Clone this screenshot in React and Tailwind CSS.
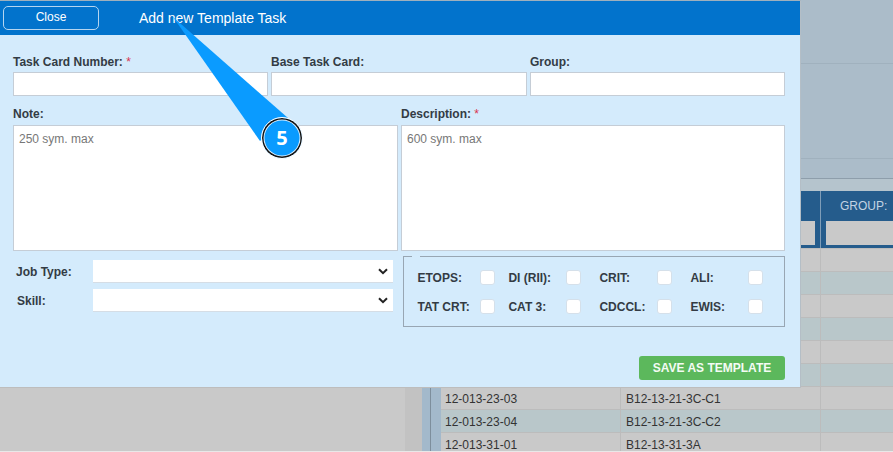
import React from "react";

const rows = [
    { bg: "bg-[#c9c9c9]" },
    { bg: "bg-[#b9c7ca]" },
    { bg: "bg-[#c9c9c9]" },
    { bg: "bg-[#b9c7ca]" },
    { bg: "bg-[#c9c9c9]" },
    { bg: "bg-[#b9c7ca]" },
    { bg: "bg-[#c9c9c9]", a: "12-013-23-03", b: "B12-13-21-3C-C1" },
    { bg: "bg-[#b9c7ca]", a: "12-013-23-04", b: "B12-13-21-3C-C2" },
    { bg: "bg-[#c9c9c9]", a: "12-013-31-01", b: "B12-13-31-3A" },
];

const checks = [
    ["ETOPS:", "DI (RII):", "CRIT:", "ALI:"],
    ["TAT CRT:", "CAT 3:", "CDCCL:", "EWIS:"],
];

function Label({ children, required, className = "" }) {
    return (
        <div className={`text-[12px] leading-[14px] font-bold text-[#333b44] h-[17px] ${className}`}>
            {children}
            {required && <span className="text-[#d9344f] font-normal"> *</span>}
        </div>
    );
}

function Field({ label, required, className }) {
    return (
        <div className={className}>
            <Label required={required}>{label}</Label>
            <div className="h-[24px] bg-white border border-[#c5cdd6]" />
        </div>
    );
}

function Area({ label, required, hint, className }) {
    return (
        <div className={className}>
            <Label required={required} className="-mt-[1px] mb-[1px]">{label}</Label>
            <div className="h-[126px] bg-white border border-[#c5cdd6] px-[5px] py-[5px] text-[12px] leading-[16px] text-[#777]">
                {hint}
            </div>
        </div>
    );
}

function Select({ label, className }) {
    return (
        <div className="flex items-center h-[23px]">
            <div className={`w-[80px] text-[12px] font-bold text-[#333b44] ${className}`}>{label}</div>
            <div className="w-[300px] h-[23px] bg-white border-b border-[#d5dde5] flex items-center justify-end pr-[5px]">
                <svg width="10" height="7" viewBox="0 0 10 7" fill="none">
                    <path d="M1 1.2 L5 5.2 L9 1.2" stroke="#222" strokeWidth="2" />
                </svg>
            </div>
        </div>
    );
}

export default function App() {
    return (
        <div className="w-[893px] h-[452px] bg-[#e8e8e8] font-['Liberation_Sans',Arial,sans-serif]">
            <div className="relative h-[451px] overflow-hidden bg-[#c9c9c9]">
                {/* page behind the dialog */}
                <div className="h-[64px] bg-[#abbcc9] border-b border-[#a0b1be]" />
                <div className="h-[95px] bg-[#abbcc9] border-b border-[#a0b1be]" />
                <div className="h-[20px] bg-[#abbcc9] border-b border-[#8e9eab]" />
                <div className="h-[12px] bg-[#b5c4cd]" />
                <div className="h-[57px] bg-[#255c8c] flex justify-end">
                    <div className="w-[20px] h-[24px] mt-[30px] mr-[5px] bg-[#c9c9c9]" />
                    <div className="w-[73px] border-l border-[#7f9db8] pt-[7px]">
                        <div className="pl-[19px] text-[12px] leading-[16px] text-[#c3d3e2]">GROUP:</div>
                        <div className="mt-[7px] ml-[5px] h-[24px] bg-[#c9c9c9]" />
                    </div>
                </div>
                <div className="flex justify-end">
                    <div className="w-[17px] bg-[#c2c2c2]" />
                    <div className="w-[8px] bg-[#a3b9cb]" />
                    <div className="w-[1px] bg-[#7d8e9c]" />
                    <div className="w-[10px] bg-[#a3b9cb]" />
                    <div className="w-[452px]">
                        {rows.map((row, i) => (
                            <div key={i} className={`flex h-[23px] border-t border-[#bcbcbc] text-[12px] text-[#333] ${row.bg}`}>
                                <div className="w-[179px] pl-[4px] pt-[2px] flex items-center">{row.a}</div>
                                <div className="w-[200px] pl-[5px] pt-[2px] border-l border-[#bcbcbc] flex items-center">{row.b}</div>
                                <div className="flex-1 border-l border-[#bcbcbc]" />
                            </div>
                        ))}
                    </div>
                </div>

                {/* dialog */}
                <div className="absolute left-0 top-0 w-[801px] h-[388px] bg-[#d4ebfc] border-t border-r border-b border-t-[#9fb0bd] border-r-[#b4bec6] border-b-[#bdbdbd]">
                    <div className="h-[34px] bg-[#0273cc] flex items-center pl-[3px]">
                        <div className="w-[96px] h-[24px] rounded-[5px] border border-[#b5d5f0] text-white text-[12px] pb-[2px] flex items-center justify-center">
                            Close
                        </div>
                        <div className="ml-[40px] text-[14px] text-white">Add new Template Task</div>
                    </div>
                    <div className="pl-[13px] pr-[15px] pt-[20px]">
                        <div className="flex gap-[3px]">
                            <Field label="Task Card Number:" required className="w-[255px]" />
                            <Field label="Base Task Card:" className="w-[256px]" />
                            <Field label="Group:" className="w-[255px]" />
                        </div>
                        <div className="flex gap-[3px] mt-[12px]">
                            <Area label="Note:" hint="250 sym. max" className="w-[385px]" />
                            <Area label="Description:" required hint="600 sym. max" className="w-[384px]" />
                        </div>
                        <div className="flex mt-[5px]">
                            <div className="w-[391px] pt-[4px] flex flex-col gap-[6px]">
                                <Select label="Job Type:" className="pl-[3px]" />
                                <Select label="Skill:" className="pl-[4px]" />
                            </div>
                            <fieldset className="ml-[1px] w-[383px] h-[71px] border border-[#98a6b3] pl-[13px] flex flex-col gap-[9px]">
                                <legend className="-ml-[5px] w-[8px] h-0" />
                                <div className="h-[2px]" />
                                {checks.map((line, i) => (
                                    <div key={i} className="flex h-[20px]">
                                        {line.map((text, j) => (
                                            <div key={text} className="w-[91px] flex items-center">
                                                <div className={`${j === 0 ? "w-[63px]" : "w-[58px]"} text-[12px] font-bold text-[#333b44]`}>{text}</div>
                                                <div className="w-[15px] h-[15px] mb-[2px] bg-white rounded-[3px] border border-[#d5e0ea]" />
                                            </div>
                                        ))}
                                    </div>
                                ))}
                            </fieldset>
                        </div>
                        <div className="flex justify-end mt-[29px]">
                            <div className="w-[146px] h-[24px] rounded-[3px] bg-[#5cb85c] text-[#f4fbf4] text-[12px] font-bold flex items-center justify-center">
                                SAVE AS TEMPLATE
                            </div>
                        </div>
                    </div>
                </div>

                {/* callout */}
                <svg className="absolute left-0 top-0" width="893" height="452" viewBox="0 0 893 452" fill="none">
                    <path d="M173 17 L288 118 L260 141 Z" fill="#0a9bff" />
                </svg>
                <div className="absolute left-[261px] top-[117px] w-[42px] h-[42px] rounded-full bg-[#0a9bff] border border-white shadow-[inset_0_0_0_1.5px_#111,inset_0_0_0_2.5px_#d8eeff] flex items-center justify-center text-white text-[20px] font-bold font-['Open_Sans',sans-serif]">
                    5
                </div>
            </div>
        </div>
    );
}
